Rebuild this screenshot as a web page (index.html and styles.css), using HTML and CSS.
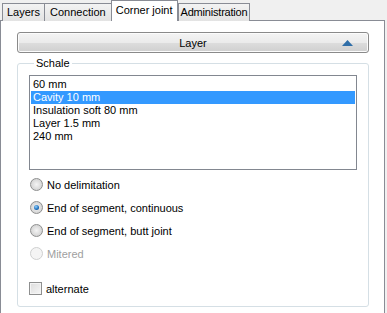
FILE: index.html
```html
<!DOCTYPE html>
<html>
<head>
    <title>Corner joint</title>
    <link rel="stylesheet" href="styles.css">
</head>
<body>
    <div class="tabs">
        <div class="tab">Layers</div>
        <div class="tab wide">Connection</div>
        <div class="tab active">Corner joint</div>
        <div class="tab narrow">Administration</div>
    </div>
    <div class="panel">
        <button class="header-btn">
            <span class="header-label">Layer</span>
            <svg class="arrow" width="11" height="6" viewBox="0 0 11 6"><polygon points="5.5,0 11,6 0,6" fill="#2f6ea8"/></svg>
        </button>
        <fieldset class="group">
            <legend>Schale</legend>
            <ul class="listbox">
                <li>60 mm</li>
                <li class="selected">Cavity 10 mm</li>
                <li>Insulation soft 80 mm</li>
                <li>Layer 1.5 mm</li>
                <li>240 mm</li>
            </ul>
            <div class="options">
                <label class="option"><span class="radio"></span>No delimitation</label>
                <label class="option"><span class="radio checked"></span>End of segment, continuous</label>
                <label class="option"><span class="radio"></span>End of segment, butt joint</label>
                <label class="option disabled"><span class="radio"></span>Mitered</label>
            </div>
            <label class="option check-row"><span class="checkbox"></span>alternate</label>
        </fieldset>
    </div>
</body>
</html>
```

FILE: styles.css
```css
body {
    margin: 0;
    background-color: #f0f0f0;
    font-family: "Liberation Sans", Arial, sans-serif;
    font-size: 11px;
    color: #000;
    width: 387px;
    height: 313px;
    overflow: hidden;
}
.tabs {
    display: flex;
    align-items: flex-end;
    height: 21px;
    padding-left: 2px;
    position: relative;
    z-index: 1;
}
.tab {
    height: 17px;
    line-height: 17px;
    padding: 0 4px;
    border: 1px solid #898c95;
    border-bottom: none;
    margin-right: -1px;
    background: linear-gradient(#f3f3f3, #e3e3e3);
    font-size: 11px;
}
.tab.wide {
    padding: 0 5px;
}
.tab.narrow {
    padding: 0 2px;
    letter-spacing: -0.2px;
}
.tab.active {
    height: 20px;
    line-height: 18px;
    background: #fff;
    padding: 0 4px;
    margin-left: 0;
    margin-right: 0;
    position: relative;
}
.panel {
    background: #fff;
    border: 1px solid #898c95;
    border-bottom: none;
    height: 300px;
    margin-top: -1px;
    padding: 11px 0 0 16px;
    box-sizing: border-box;
    width: 385px;
}
.header-btn {
    display: flex;
    align-items: center;
    width: 352px;
    height: 21px;
    border: 1px solid #8a8a8a;
    border-radius: 3px;
    background: linear-gradient(#f4f4f4 0%, #ebebeb 50%, #dddddd 51%, #cfcfcf 100%);
    font-family: "Liberation Sans", Arial, sans-serif;
    font-size: 11px;
    padding: 0;
    position: relative;
    box-shadow: inset 0 0 0 1px #fcfcfc;
}
.header-label {
    flex: 1;
    text-align: center;
}
.arrow {
    position: absolute;
    right: 15px;
    top: 7px;
}
.group {
    width: 352px;
    box-sizing: border-box;
    margin: 4px 0 0 0;
    padding: 6px 11px 0 11px;
    height: 250px;
    border: 1px solid #d5dfe5;
    border-radius: 3px;
}
.group legend {
    padding: 0 2px;
    margin-left: 5px;
    font-size: 11px;
}
.listbox {
    list-style: none;
    margin: 0;
    padding: 2px 1px;
    height: 95px;
    box-sizing: border-box;
    border: 1px solid #828790;
}
.listbox li {
    height: 13px;
    line-height: 13px;
    padding-left: 2px;
    font-size: 11px;
}
.listbox li.selected {
    background: #3399ff;
    color: #fff;
}
.options {
    display: flex;
    flex-direction: column;
    gap: 10px;
    margin-top: 8px;
    padding-left: 1px;
}
.option {
    display: flex;
    align-items: center;
    gap: 4px;
    height: 13px;
    font-size: 11px;
}
.option.disabled {
    color: #a0a0a0;
}
.radio {
    width: 11px;
    height: 11px;
    border-radius: 50%;
    border: 1px solid #8e8f8f;
    background: radial-gradient(circle at 50% 50%, #f4f4f4 0%, #dcdcdc 55%, #c9c9c9 100%);
    flex-shrink: 0;
    position: relative;
}
.radio.checked::after {
    content: "";
    position: absolute;
    left: 3px;
    top: 3px;
    width: 5px;
    height: 5px;
    border-radius: 50%;
    background: radial-gradient(circle at 40% 35%, #8fd0ff 0%, #1e6db8 60%, #0b4a8c 100%);
}
.option.disabled .radio {
    border-color: #cfd0d0;
    background: #f4f4f4;
}
.check-row {
    margin-top: 22px;
}
.checkbox {
    width: 11px;
    height: 11px;
    border: 1px solid #8e8f8f;
    background: linear-gradient(135deg, #dcdcdc, #f6f6f6);
    box-shadow: inset 0 0 0 1px #f4f4f4;
    flex-shrink: 0;
}
```
